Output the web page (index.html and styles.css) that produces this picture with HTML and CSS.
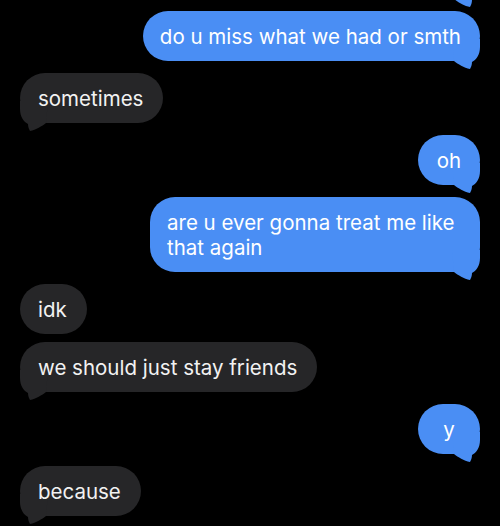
FILE: index.html
```html
<!DOCTYPE html>
<html lang="en">
  <head>
    <meta charset="UTF-8" />
    <meta name="viewport" content="width=device-width, initial-scale=1.0" />
    <title>Messages</title>
    <link rel="stylesheet" href="styles.css">
  </head>
  <body>
    <div id="thread">
      <!-- tail of the previous message, scrolled off the top -->
      <div class="bubble sent earlier" aria-hidden="true">
        <svg class="tail" viewBox="0 0 28 31"><path d="M28 0 L28 8 C28 16 24 21 20 23 C20 26 19 28 18 30 C12 29 6 25 2 22 L0 0 Z"/></svg>
      </div>

      <div class="bubble sent">
        do u miss what we had or smth
        <svg class="tail" viewBox="0 0 28 31"><path d="M28 0 L28 8 C28 16 24 21 20 23 C20 26 19 28 18 30 C12 29 6 25 2 22 L0 0 Z"/></svg>
      </div>

      <div class="bubble received">
        sometimes
        <svg class="tail" viewBox="0 0 28 31"><path d="M28 0 L28 8 C28 16 24 21 20 23 C20 26 19 28 18 30 C12 29 6 25 2 22 L0 0 Z"/></svg>
      </div>

      <div class="bubble sent short">
        oh
        <svg class="tail" viewBox="0 0 28 31"><path d="M28 0 L28 8 C28 16 24 21 20 23 C20 26 19 28 18 30 C12 29 6 25 2 22 L0 0 Z"/></svg>
      </div>

      <div class="bubble sent wrapped">
        are u ever gonna treat me like that again
        <svg class="tail" viewBox="0 0 28 31"><path d="M28 0 L28 8 C28 16 24 21 20 23 C20 26 19 28 18 30 C12 29 6 25 2 22 L0 0 Z"/></svg>
      </div>

      <div class="bubble received grouped">idk</div>

      <div class="bubble received">
        we should just stay friends
        <svg class="tail" viewBox="0 0 28 31"><path d="M28 0 L28 8 C28 16 24 21 20 23 C20 26 19 28 18 30 C12 29 6 25 2 22 L0 0 Z"/></svg>
      </div>

      <div class="bubble sent short">
        y
        <svg class="tail" viewBox="0 0 28 31"><path d="M28 0 L28 8 C28 16 24 21 20 23 C20 26 19 28 18 30 C12 29 6 25 2 22 L0 0 Z"/></svg>
      </div>

      <div class="bubble received">
        because
        <svg class="tail" viewBox="0 0 28 31"><path d="M28 0 L28 8 C28 16 24 21 20 23 C20 26 19 28 18 30 C12 29 6 25 2 22 L0 0 Z"/></svg>
      </div>
    </div>
  </body>
</html>
```

FILE: styles.css
```css
/* Reset */
* {
  margin: 0;
  padding: 0;
  box-sizing: border-box;
}

body {
  font-family: Inter, 'Noto Sans', sans-serif;
  background-color: #000;
  color: #fff;
  height: 526px;
  overflow: hidden;
}

#thread {
  display: flex;
  flex-direction: column;
  padding: 0 20px;
  margin-top: -51px;
}

.bubble {
  position: relative;
  isolation: isolate;
  max-width: 346px;
  min-width: 50px;
  padding: 13px 19px 12px 17px;
  margin-bottom: 12px;
  border-radius: 25px;
  font-size: 20.5px;
  line-height: 25px;
}

.bubble.sent {
  align-self: flex-end;
  background-color: #4a8ef4;
  color: #fff;
}

.bubble.received {
  align-self: flex-start;
  background-color: #262628;
  color: #f2f2f2;
  padding: 13px 20px 12px 18px;
}

/* wrapped text doesn't shrink the box, so cap it to the first line */
.bubble.wrapped {
  max-width: 330px;
}

.bubble.short {
  min-width: 62px;
  text-align: center;
  padding-left: 16px;
  padding-right: 16px;
}

.bubble.grouped {
  margin-bottom: 8px;
}

.bubble.earlier {
  width: 120px;
  height: 50px;
}

.tail {
  position: absolute;
  z-index: -1;
  bottom: -9px;
  width: 28px;
  height: 31px;
  fill: currentColor;
}

.sent .tail {
  right: 0;
  color: #4a8ef4;
}

.received .tail {
  left: 0;
  color: #262628;
  transform: scaleX(-1);
}
```
